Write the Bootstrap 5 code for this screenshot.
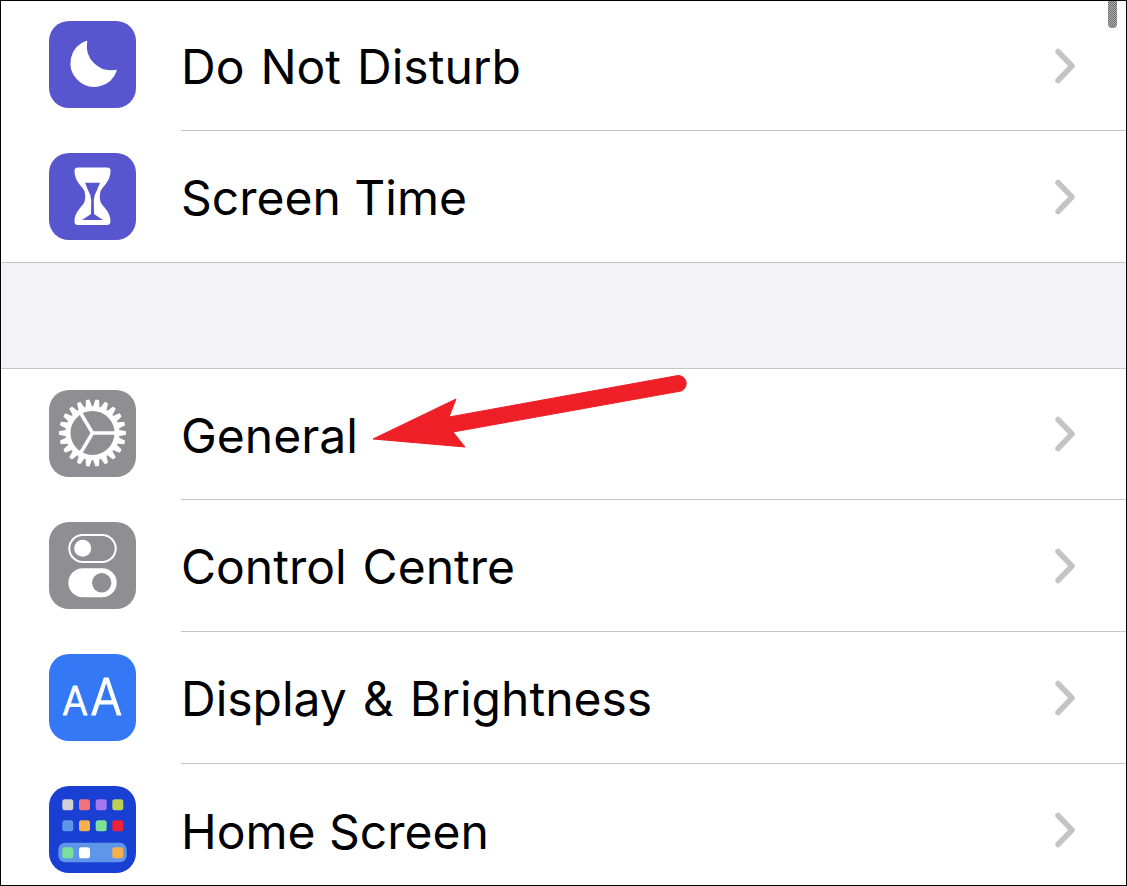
<!DOCTYPE html>
<html lang="en">
<head>
<meta charset="utf-8">
<title>Settings</title>
<link href="https://cdn.jsdelivr.net/npm/bootstrap@5.3.0/dist/css/bootstrap.min.css" rel="stylesheet">
<style>
html,body{margin:0;background:#fff;overflow:hidden}
.frame{width:1127px;height:886px;border:1px solid #000;overflow:hidden;background:#fff;font-family:Inter,"Liberation Sans",Arial,sans-serif;color:#000}
.rowline{height:132px;padding-left:48px;padding-top:22px;flex:none;align-items:flex-start}
.rowline.first{height:130px;padding-top:20px}
.rowline.first .body{margin-top:-20px;height:130px}
.rowline.nosep{height:131px}
.rowline.nosep .body{height:131px;border-bottom:0}
.rowline.top{height:131px;padding-top:21px}
.rowline.top .body{margin-top:-21px;height:131px}
.tile{width:87px;height:87px;flex:none;display:block}
.body{margin-top:-22px;margin-left:45px;height:132px;border-bottom:1px solid #c6c6c8;padding-right:50px}
.rowline.last .body{border-bottom:0}
.label{font-size:48px;line-height:1;margin-top:3px;font-weight:400}
.label.spaced{word-spacing:2.500px}
.chev{width:24px;height:36px;display:block}
.band{height:107px;flex:none;background:#f2f2f7;border-top:1px solid #c6c6c8;border-bottom:1px solid #c6c6c8}
.thumb{position:absolute;left:1107px;top:0;width:9px;height:27px;border-radius:0 0 4px 4px;background:repeating-conic-gradient(#6e6e6e 0 25%,#adadad 0 50%) 0 0/2px 2px}
.pointer{position:absolute;left:0;top:0;width:1127px;height:886px;pointer-events:none}
</style>
</head>
<body>
<div class="frame position-relative d-flex flex-column">
  <div class="thumb"></div>

  <div class="rowline first d-flex">
    <svg class="tile" viewBox="0 0 87 87"><rect width="87" height="87" rx="20" fill="#5856ce"/><path d="M37.500 20.500A23 23 0 1 0 67 49.500A25 25 0 0 1 37.500 20.500Z" fill="#fff" stroke="#fff" stroke-width="1.500" stroke-linejoin="round"/></svg>
    <div class="body flex-grow-1 d-flex align-items-center justify-content-between"><span class="label spaced">Do Not Disturb</span>
      <svg class="chev" viewBox="0 0 24 36"><path d="M6 3.500L20 18L6 32.500" fill="none" stroke="#c4c4c7" stroke-width="5.500" stroke-linecap="round" stroke-linejoin="round"/></svg></div>
  </div>

  <div class="rowline nosep d-flex">
    <svg class="tile" viewBox="0 0 87 87"><rect width="87" height="87" rx="20" fill="#5856ce"/><path d="M29 14.500H58Q62 14.500 61.500 18.500C61 29 54 33 51.500 38Q50 43.500 51.500 49C54 54 61.500 59 61.500 68Q61.500 72 58 72H29Q25 72 25.500 68C25.500 59 33 54 35.500 49Q37 43.500 35.500 38C33 33 26 29 25.500 18.500Q25 14.500 29 14.500Z" fill="#fff"/><path d="M36 29.700H51L47.700 37.700Q45 42 44.800 47L45 61L54 67H33L42 61L42.200 47Q42 42 39.300 37.700Z" fill="#5856ce"/></svg>
    <div class="body flex-grow-1 d-flex align-items-center justify-content-between"><span class="label">Screen Time</span>
      <svg class="chev" viewBox="0 0 24 36"><path d="M6 3.500L20 18L6 32.500" fill="none" stroke="#c4c4c7" stroke-width="5.500" stroke-linecap="round" stroke-linejoin="round"/></svg></div>
  </div>

  <div class="band"></div>

  <div class="rowline top d-flex">
    <svg class="tile" viewBox="0 0 87 87"><defs><polygon id="tooth" points="40,18 47,18 45.300,9.500 41.700,9.500" fill="#fff"/></defs><rect width="87" height="87" rx="20" fill="#8e8e93"/><g fill="none" stroke="#fff"><circle cx="43.500" cy="43" r="24.500" stroke-width="5"/><path d="M43.500 43H68M43.500 43L31 22M43.500 43L31 64" stroke-width="3.500"/></g>
      <use href="#tooth" transform="rotate(8.180 43.500 43)"/><use href="#tooth" transform="rotate(24.550 43.500 43)"/><use href="#tooth" transform="rotate(40.910 43.500 43)"/><use href="#tooth" transform="rotate(57.270 43.500 43)"/><use href="#tooth" transform="rotate(73.640 43.500 43)"/><use href="#tooth" transform="rotate(90 43.500 43)"/><use href="#tooth" transform="rotate(106.360 43.500 43)"/><use href="#tooth" transform="rotate(122.730 43.500 43)"/><use href="#tooth" transform="rotate(139.090 43.500 43)"/><use href="#tooth" transform="rotate(155.450 43.500 43)"/><use href="#tooth" transform="rotate(171.820 43.500 43)"/><use href="#tooth" transform="rotate(188.180 43.500 43)"/><use href="#tooth" transform="rotate(204.550 43.500 43)"/><use href="#tooth" transform="rotate(220.910 43.500 43)"/><use href="#tooth" transform="rotate(237.270 43.500 43)"/><use href="#tooth" transform="rotate(253.640 43.500 43)"/><use href="#tooth" transform="rotate(270 43.500 43)"/><use href="#tooth" transform="rotate(286.360 43.500 43)"/><use href="#tooth" transform="rotate(302.730 43.500 43)"/><use href="#tooth" transform="rotate(319.090 43.500 43)"/><use href="#tooth" transform="rotate(335.450 43.500 43)"/><use href="#tooth" transform="rotate(351.820 43.500 43)"/></svg>
    <div class="body flex-grow-1 d-flex align-items-center justify-content-between"><span class="label">General</span>
      <svg class="chev" viewBox="0 0 24 36"><path d="M6 3.500L20 18L6 32.500" fill="none" stroke="#c4c4c7" stroke-width="5.500" stroke-linecap="round" stroke-linejoin="round"/></svg></div>
  </div>

  <div class="rowline d-flex">
    <svg class="tile" viewBox="0 0 87 87"><rect width="87" height="87" rx="20" fill="#8e8e93"/><rect x="20.300" y="13" width="46.400" height="27" rx="13.500" fill="none" stroke="#fff" stroke-width="2"/><circle cx="33.700" cy="26.300" r="8.500" fill="#fff"/><rect x="19.300" y="46.300" width="48.400" height="29" rx="14.500" fill="#fff"/><circle cx="52.700" cy="60.800" r="9.700" fill="#8e8e93"/></svg>
    <div class="body flex-grow-1 d-flex align-items-center justify-content-between"><span class="label spaced">Control Centre</span>
      <svg class="chev" viewBox="0 0 24 36"><path d="M6 3.500L20 18L6 32.500" fill="none" stroke="#c4c4c7" stroke-width="5.500" stroke-linecap="round" stroke-linejoin="round"/></svg></div>
  </div>

  <div class="rowline d-flex">
    <svg class="tile" viewBox="0 0 87 87"><rect width="87" height="87" rx="20" fill="#3478f6"/><g fill="#fff" stroke="#fff" stroke-width="1.200" stroke-linejoin="round" font-family="Inter,'Liberation Sans',sans-serif" font-weight="300"><text x="15" y="61.500" font-size="40" transform="translate(-1 0) scale(.95 1)">A</text><text x="45" y="61.500" font-size="51" transform="scale(.92 1)">A</text></g></svg>
    <div class="body flex-grow-1 d-flex align-items-center justify-content-between"><span class="label spaced">Display &amp; Brightness</span>
      <svg class="chev" viewBox="0 0 24 36"><path d="M6 3.500L20 18L6 32.500" fill="none" stroke="#c4c4c7" stroke-width="5.500" stroke-linecap="round" stroke-linejoin="round"/></svg></div>
  </div>

  <div class="rowline last d-flex">
    <svg class="tile" viewBox="0 0 87 87"><rect width="87" height="87" rx="20" fill="#1a3fd3"/><rect x="9.300" y="56.700" width="68.400" height="19.600" rx="7" fill="#5f96ea"/><g><rect x="13.300" y="13.300" width="11" height="11" rx="2.500" fill="#d0d0d4"/><rect x="30" y="13.300" width="11" height="11" rx="2.500" fill="#f2737a"/><rect x="46.700" y="13.300" width="11" height="11" rx="2.500" fill="#a678ee"/><rect x="63.300" y="13.300" width="11" height="11" rx="2.500" fill="#bbcf52"/><rect x="13.300" y="34.300" width="11" height="11" rx="2.500" fill="#5f96ea"/><rect x="30" y="34.300" width="11" height="11" rx="2.500" fill="#f4b04c"/><rect x="46.700" y="34.300" width="11" height="11" rx="2.500" fill="#7de09a"/><rect x="63.300" y="34.300" width="11" height="11" rx="2.500" fill="#ee2338"/><rect x="13.300" y="61.300" width="11" height="11" rx="2.500" fill="#7de09a"/><rect x="30" y="61.300" width="11" height="11" rx="2.500" fill="#fff"/><rect x="63.300" y="61.300" width="11" height="11" rx="2.500" fill="#f4b04c"/></g></svg>
    <div class="body flex-grow-1 d-flex align-items-center justify-content-between"><span class="label">Home Screen</span>
      <svg class="chev" viewBox="0 0 24 36"><path d="M6 3.500L20 18L6 32.500" fill="none" stroke="#c4c4c7" stroke-width="5.500" stroke-linecap="round" stroke-linejoin="round"/></svg></div>
  </div>

  <svg class="pointer" viewBox="0 0 1127 886"><path d="M372 438L455 398L448 416L677 374.500A8 8 0 0 1 680 390L452 431L464 446Z" fill="#ee1f27" stroke="#ee1f27" stroke-width="1" stroke-linejoin="round"/></svg>
</div>
</body>
</html>
